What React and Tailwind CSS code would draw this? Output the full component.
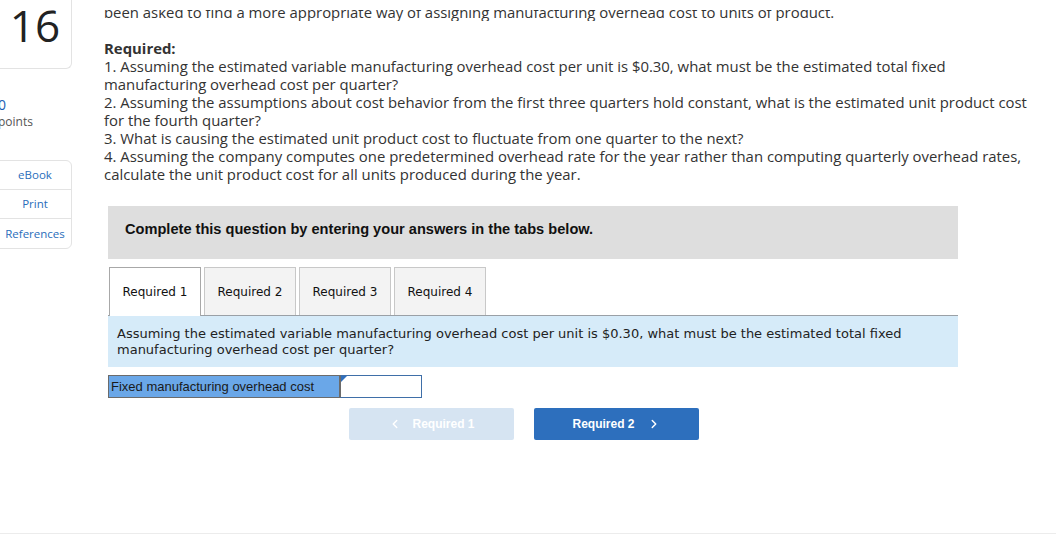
import { ChevronLeft, ChevronRight } from "lucide-react";

const proxima = { fontFamily: "'Open Sans', Lato, sans-serif" };

const questionLines = [
  "1. Assuming the estimated variable manufacturing overhead cost per unit is $0.30, what must be the estimated total fixed",
  "manufacturing overhead cost per quarter?",
  "2. Assuming the assumptions about cost behavior from the first three quarters hold constant, what is the estimated unit product cost",
  "for the fourth quarter?",
  "3. What is causing the estimated unit product cost to fluctuate from one quarter to the next?",
  "4. Assuming the company computes one predetermined overhead rate for the year rather than computing quarterly overhead rates,",
  "calculate the unit product cost for all units produced during the year.",
];

const tabs = ["Required 1", "Required 2", "Required 3", "Required 4"];

const Sidebar = () => (
  <div className="w-[76px] shrink-0 -ml-[4px] flex flex-col" style={proxima}>
    <div className="h-[69px] border border-t-0 border-[#e3e3e3] rounded-br-md flex justify-center pt-[3px]">
      <span className="text-[44px] text-[#222] leading-none pl-[2px]">16</span>
    </div>
    <div className="mt-[27px] pl-[2px]">
      <div className="text-[14px] leading-[18px] text-[#1a5fb4]">0</div>
      <div className="text-[12px] leading-[16px] text-[#555]">points</div>
    </div>
    <div className="mt-[30px] border border-[#e3e3e3] rounded-r-md flex flex-col text-[11.5px] text-[#2a6ebb]">
      <div className="h-[29px] flex items-center justify-center border-b border-[#e3e3e3] pl-[2px]">eBook</div>
      <div className="h-[29px] flex items-center justify-center border-b border-[#e3e3e3] pl-[2px]">Print</div>
      <div className="h-[29px] flex items-center justify-center pl-[2px]">References</div>
    </div>
  </div>
);

export default function App() {
  return (
    <div className="w-[1056px] h-[536px] bg-white overflow-hidden flex flex-col">
      <div className="flex flex-1">
        <Sidebar />
        <div className="ml-[32px] flex-1 text-[#333]" style={proxima}>
          <div className="h-[11px] mt-[10px] overflow-hidden">
            <div className="-mt-[7px] text-[14.9px] leading-[18px] whitespace-nowrap">
              been asked to find a more appropriate way of assigning manufacturing overhead cost to units of product.
            </div>
          </div>
          <div className="mt-[18px] text-[14.9px] leading-[18px]">
            <div className="font-bold">Required:</div>
            {questionLines.map((line) => (
              <div key={line} className="whitespace-nowrap">{line}</div>
            ))}
          </div>

          <div className="ml-[4px] w-[850px]">
            <div className="mt-[23px] h-[53px] bg-[#dedede] pt-[13px] pl-[17px] font-['Liberation_Sans',Arial,sans-serif] font-bold text-[14.6px] text-[#111]">
              Complete this question by entering your answers in the tabs below.
            </div>

            <div className="mt-[8px] flex gap-[3px] pl-[1px] font-['DejaVu_Sans',Verdana,sans-serif] text-[12px] text-[#111] relative z-10">
              {tabs.map((t, i) => (
                <div
                  key={t}
                  className={
                    i === 0
                      ? "w-[92px] h-[49px] -mb-[1px] flex items-center justify-center bg-white border border-b-0 border-[#a8a8a8]"
                      : "w-[92px] h-[48px] flex items-center justify-center bg-[#f3f3f3] border border-b-0 border-[#c8c8c8]"
                  }
                >
                  {t}
                </div>
              ))}
            </div>

            <div className="border-t border-[#9aa0a6] bg-[#d6ebf9] h-[52px] pl-[9px] pt-[10px] font-['DejaVu_Sans',Verdana,sans-serif] text-[13px] leading-[16px] text-[#222]">
              <div className="whitespace-nowrap">
                Assuming the estimated variable manufacturing overhead cost per unit is $0.30, what must be the estimated total fixed
              </div>
              <div className="whitespace-nowrap">manufacturing overhead cost per quarter?</div>
            </div>

            <div className="mt-[8px] flex h-[23px] font-['Liberation_Sans',Arial,sans-serif] text-[13px]">
              <div className="w-[232px] bg-[#6aa7e8] border border-[#6b6b6b] flex items-center pl-[2px] text-[#1a1a1a]">
                Fixed manufacturing overhead cost
              </div>
              <div className="relative w-[82px] bg-white border border-[#3f6fa8] border-l-[#6b6b6b]">
                <div className="absolute left-0 top-0 w-0 h-0 border-t-[6px] border-t-[#2f6fbd] border-r-[6px] border-r-transparent" />
              </div>
            </div>

            <div className="mt-[10px] ml-[241px] flex gap-[20px] font-['Liberation_Sans',Arial,sans-serif] font-bold text-[12px] text-white">
              <div className="w-[165px] h-[32px] rounded-[2px] bg-[#d6e4f2] flex items-center justify-center gap-[10px]">
                <ChevronLeft size={14} strokeWidth={2.5} className="text-white" />
                <span>Required 1</span>
              </div>
              <div className="w-[165px] h-[32px] rounded-[2px] bg-[#2d6fbd] flex items-center justify-center gap-[12px]">
                <span>Required 2</span>
                <ChevronRight size={14} strokeWidth={2.5} className="text-white" />
              </div>
            </div>
          </div>
        </div>
      </div>
      <div className="h-[3px] border-t border-[#ececec] bg-white" />
    </div>
  );
}
